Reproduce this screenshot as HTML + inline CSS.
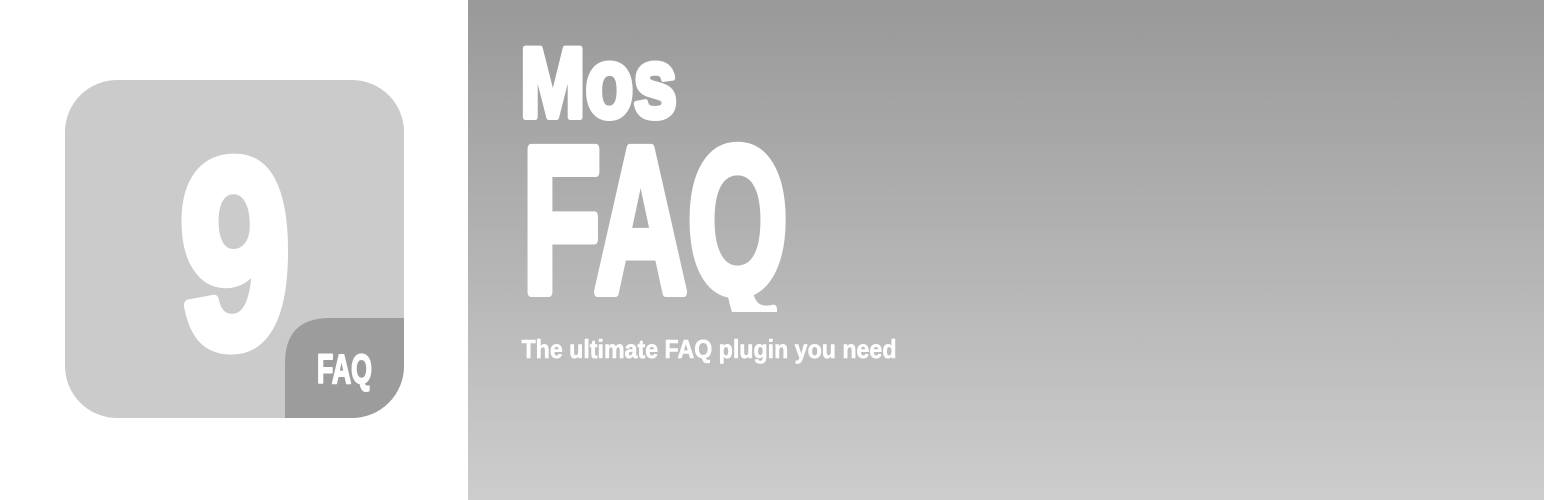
<!DOCTYPE html>
<html><head><meta charset="utf-8"><style>
html,body{margin:0;padding:0;width:1544px;height:500px;overflow:hidden;background:#fff}
svg{display:block}
text{font-family:"Liberation Sans",sans-serif;font-weight:bold;fill:#fff;stroke:#fff;stroke-linejoin:round}
</style></head><body>
<svg width="1544" height="500" viewBox="0 0 1544 500" xmlns="http://www.w3.org/2000/svg">
<defs>
<linearGradient id="bg" x1="0" y1="0" x2="0" y2="1">
<stop offset="0" stop-color="#999"/>
<stop offset="1" stop-color="#cdcdcd"/>
</linearGradient>
<clipPath id="ic"><rect x="65" y="80" width="339" height="338" rx="52"/></clipPath>
<clipPath id="qc"><rect x="500" y="100" width="400" height="212"/></clipPath>
</defs>
<rect x="0" y="0" width="468" height="500" fill="#fff"/>
<rect x="468" y="0" width="1076" height="500" fill="url(#bg)"/>
<g clip-path="url(#ic)">
<rect x="65" y="80" width="339" height="338" fill="#cbcbcb"/>
<path d="M285 418 V363 Q285 318 330 318 H404 V418 Z" fill="#9c9c9c"/>
</g>
<text x="179" y="346" font-size="267" stroke-width="12" textLength="112" lengthAdjust="spacingAndGlyphs">9</text>
<text x="317" y="383" font-size="41" stroke-width="2" textLength="55" lengthAdjust="spacingAndGlyphs">FAQ</text>
<text x="520" y="117" font-size="99" stroke-width="6" textLength="157" lengthAdjust="spacingAndGlyphs">Mos</text>
<g clip-path="url(#qc)">
<text x="522" y="292" font-size="208" stroke-width="10" textLength="266" lengthAdjust="spacingAndGlyphs">FAQ</text>
</g>
<text x="521.5" y="358" font-size="26" stroke-width="0.6" textLength="375" lengthAdjust="spacingAndGlyphs">The ultimate FAQ plugin you need</text>
</svg>
</body></html>
